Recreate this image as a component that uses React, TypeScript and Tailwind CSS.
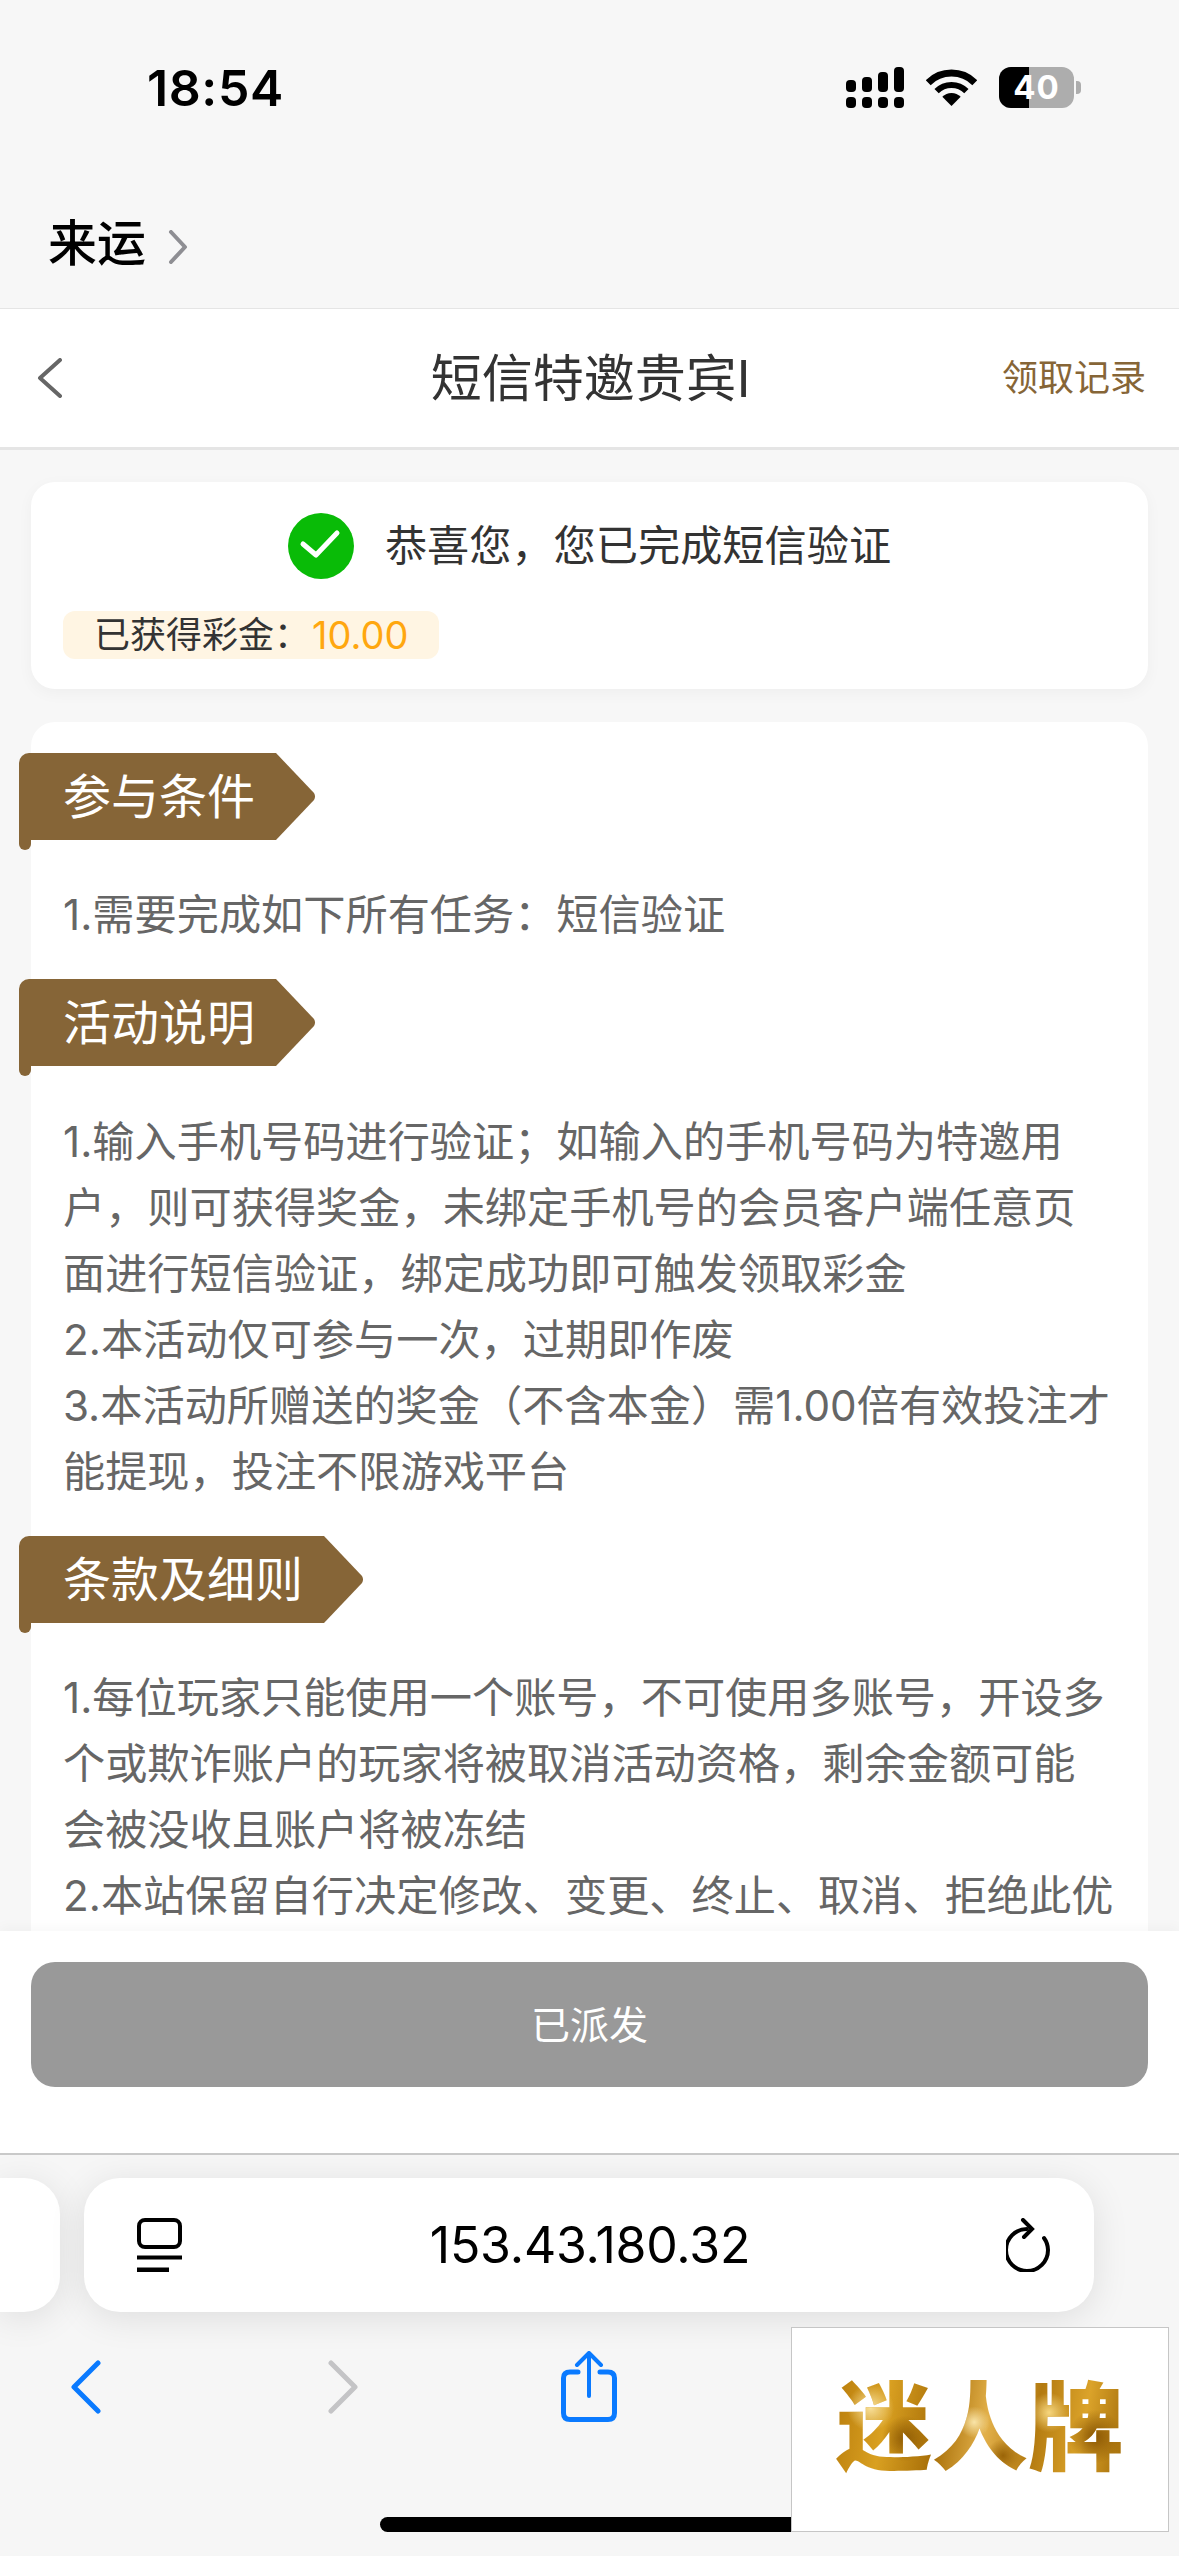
import React from 'react';

const SANS = 'font-["Inter","Noto_Sans_CJK_SC",sans-serif]';

const Ribbon: React.FC<{ title: string }> = ({ title }) => (
  <div className="relative -ml-[44px] flex w-fit">
    <div className="flex h-[87px] items-center rounded-tl-[10px] bg-[#866537] pl-[44px] pr-[21px] text-[48px] leading-none text-white">
      {title}
    </div>
    <svg width="41" height="87" viewBox="0 0 41 87" className="-ml-px block">
      <path d="M0 0 H1 L39 40 Q41 43.5 39 47 L1 87 H0 Z" fill="#866537" />
    </svg>
    <div className="absolute left-0 top-[87px] h-[10px] w-[12px] rounded-b-[8px] bg-[#866537]" />
  </div>
);

const Body: React.FC<{ lines: string[]; className?: string }> = ({ lines, className }) => (
  <div className={`text-[42.2px] leading-[66px] text-[#666666] ${className ?? ''}`}>
    {lines.map((line) => (
      <p key={line}>{line}</p>
    ))}
  </div>
);

const StatusBar: React.FC = () => (
  <div className="flex h-[130px] items-start justify-between pl-[147px] pr-[98px] pt-[61px]">
    <span className="text-[50px] font-semibold leading-[55px] tracking-[0.6px] text-black">18:54</span>
    <div className="flex items-start pt-[6px]">
      <svg width="58" height="41" viewBox="0 0 58 41" className="block">
        <rect x="0" y="13" width="10" height="12" rx="4" />
        <rect x="16" y="10" width="10" height="15" rx="4" />
        <rect x="32" y="5" width="10" height="20" rx="4" />
        <rect x="48" y="0" width="10" height="25" rx="4" />
        <rect x="0" y="30" width="10" height="11" rx="4" />
        <rect x="16" y="30" width="10" height="11" rx="4" />
        <rect x="32" y="30" width="10" height="11" rx="4" />
        <rect x="48" y="30" width="10" height="11" rx="4" />
      </svg>
      <svg width="51" height="37" viewBox="0 0 51 37" className="ml-[22px] mt-[2px] block">
        <path d="M25.5 37 L16.3 27.8 A13 13 0 0 1 34.7 27.8 Z" />
        <path d="M10.6 22.2 A21 21 0 0 1 40.4 22.2" fill="none" stroke="#000" strokeWidth="6" />
        <path d="M2.2 13.7 A33 33 0 0 1 48.8 13.7" fill="none" stroke="#000" strokeWidth="7" />
      </svg>
      <div className="relative ml-[22px] flex h-[41px] w-[75px] overflow-hidden rounded-[12px] bg-[#adadad]">
        <div className="h-full w-[30px] bg-black" />
        <span className="absolute inset-0 flex items-center justify-center text-[33px] font-bold leading-none tracking-[1px] text-white">
          40
        </span>
      </div>
      <div className="ml-[2px] mt-[14px] h-[13px] w-[5px] rounded-r-[4px] bg-[#adadad]" />
    </div>
  </div>
);

const BrowserBar: React.FC = () => (
  <div className="flex-1 bg-[#f6f6f6]">
    <div className="flex pt-[23px]">
      <div className="h-[134px] w-[60px] rounded-r-[36px] bg-white shadow-[0_6px_36px_rgba(0,0,0,0.10)]" />
      <div className="ml-[24px] flex h-[134px] w-[1010px] items-center rounded-[36px] bg-white pl-[53px] pr-[43px] shadow-[0_6px_36px_rgba(0,0,0,0.10)]">
        <svg width="45" height="54" viewBox="0 0 45 54" fill="none" stroke="#000" strokeWidth="4" className="block">
          <rect x="2" y="2" width="41" height="27" rx="6" />
          <path d="M0 39.5 H45" />
          <path d="M0 52 H32" strokeWidth="5" />
        </svg>
        <span className="flex-1 pr-[8px] text-center text-[50px] leading-none tracking-[-0.2px] text-black">153.43.180.32</span>
        <svg width="45" height="54" viewBox="0 0 45 54" fill="none" stroke="#000" strokeWidth="4" strokeLinecap="round" className="block">
          <path d="M21 11 A21 21 0 1 0 42 32 A21 21 0 0 0 38 20" />
          <path d="M17 2 L26 11 L18 19" />
        </svg>
      </div>
    </div>
    <div className="mt-[39px] flex h-[71px] items-center pl-[71px]">
      <svg width="30" height="54" viewBox="0 0 30 54" fill="none" stroke="#0a7aff" strokeWidth="5" strokeLinecap="round" strokeLinejoin="round" className="block">
        <path d="M27 3 L3 27 L27 51" />
      </svg>
      <svg width="30" height="54" viewBox="0 0 30 54" fill="none" stroke="#c4c4c6" strokeWidth="5" strokeLinecap="round" strokeLinejoin="round" className="ml-[227px] block">
        <path d="M3 3 L27 27 L3 51" />
      </svg>
      <svg width="56" height="71" viewBox="0 0 56 71" fill="none" stroke="#0a7aff" strokeLinecap="round" strokeLinejoin="round" className="ml-[203px] block">
        <path d="M17 21 H9 Q2.5 21 2.5 27 V62 Q2.5 68.5 9 68.5 H47 Q53.5 68.5 53.5 62 V27 Q53.5 21 47 21 H39" strokeWidth="5" />
        <path d="M28 3 V45" strokeWidth="4" />
        <path d="M16 14 L28 2 L40 14" strokeWidth="4" />
      </svg>
    </div>
  </div>
);

const App: React.FC = () => {
  return (
    <div lang="zh-CN" className={`relative flex h-[2556px] w-[1179px] flex-col overflow-hidden bg-[#f7f7f7] ${SANS}`}>
      <StatusBar />

      <div className="flex h-[178px] items-start pl-[48px] pt-[90px]">
        <span className="text-[49px] font-medium leading-[48px] text-black">来运</span>
        <svg width="20" height="34" viewBox="0 0 20 34" fill="none" stroke="#8e8e93" strokeWidth="4" strokeLinecap="round" strokeLinejoin="round" className="ml-[22px] mt-[10px] block">
          <path d="M3 2 L17 17 L3 32" />
        </svg>
      </div>

      <div className="flex h-[142px] items-center border-t-[1px] border-b-[3px] border-[#e5e5e5] bg-white pl-[37px] pr-[33px]">
        <div className="flex-1">
          <svg width="26" height="40" viewBox="0 0 26 40" fill="none" stroke="#666666" strokeWidth="4" strokeLinecap="round" strokeLinejoin="round" className="block">
            <path d="M23 2 L3 20 L23 38" />
          </svg>
        </div>
        <span className="-ml-[2px] text-[51px] leading-none text-[#333333]">短信特邀贵宾I</span>
        <div className="flex-1 text-right text-[36px] leading-none text-[#866537]">领取记录</div>
      </div>

      <div className="flex min-h-0 flex-1 flex-col gap-[33px] overflow-hidden px-[31px] pt-[32px]">
        <div className="h-[207px] shrink-0 rounded-[24px] bg-white px-[32px] pt-[31px] shadow-[0_4px_16px_rgba(0,0,0,0.04)]">
          <div className="flex items-center justify-center gap-[31px]">
            <svg width="66" height="66" viewBox="0 0 66 66" className="block">
              <circle cx="33" cy="33" r="33" fill="#09bb07" />
              <path d="M15 31 L28 42 L49 20" fill="none" stroke="#fff" strokeWidth="5" strokeLinecap="round" strokeLinejoin="round" />
            </svg>
            <span className="text-[42.2px] leading-none text-[#333333]">恭喜您，您已完成短信验证</span>
          </div>
          <div className="mt-[32px] flex h-[48px] w-[376px] items-center rounded-[12px] bg-[#fff5e3] pl-[31px] text-[36px] leading-none text-[#333333]">
            已获得彩金：
            <span className="ml-[2px] text-[38px] text-[#ffa70f]">10.00</span>
          </div>
        </div>

        <div className="flex-1 rounded-t-[24px] bg-white px-[32px] pt-[31px]">
          <Ribbon title="参与条件" />
          <Body className="mt-[42px]" lines={['1.需要完成如下所有任务：短信验证']} />
          <div className="mt-[31px]">
            <Ribbon title="活动说明" />
          </div>
          <Body
            className="mt-[43px]"
            lines={[
              '1.输入手机号码进行验证；如输入的手机号码为特邀用户，则可获得奖金，未绑定手机号的会员客户端任意页面进行短信验证，绑定成功即可触发领取彩金',
              '2.本活动仅可参与一次，过期即作废',
              '3.本活动所赠送的奖金（不含本金）需1.00倍有效投注才能提现，投注不限游戏平台',
            ]}
          />
          <div className="mt-[31px]">
            <Ribbon title="条款及细则" />
          </div>
          <Body
            className="mt-[42px]"
            lines={[
              '1.每位玩家只能使用一个账号，不可使用多账号，开设多个或欺诈账户的玩家将被取消活动资格，剩余金额可能会被没收且账户将被冻结',
              '2.本站保留自行决定修改、变更、终止、取消、拒绝此优',
            ]}
          />
        </div>
      </div>

      <div className="h-[224px] shrink-0 border-b-[2px] border-[#c9c9c9] bg-white px-[31px] pt-[31px] shadow-[0_-4px_12px_rgba(0,0,0,0.03)]">
        <div className="flex h-[125px] items-center justify-center rounded-[24px] bg-[#999999] text-[39px] leading-none text-white">
          已派发
        </div>
      </div>

      <div className="flex h-[401px] shrink-0 flex-col">
        <BrowserBar />
      </div>

      {/* home indicator, the logo box sits on top of it */}
      <div className="absolute left-[380px] top-[2517px] h-[15px] w-[440px] rounded-full bg-black" />
      <div className="absolute left-[791px] top-[2327px] flex h-[205px] w-[378px] items-center justify-center border-[1.5px] border-[#c6c6c6] bg-white pb-[6px]">
        <span className="bg-[radial-gradient(circle_at_12%_30%,#f8e09a_0,transparent_9%),radial-gradient(circle_at_24%_62%,#8f5c05_0,transparent_10%),radial-gradient(circle_at_48%_45%,#f9e4a8_0,transparent_10%),radial-gradient(circle_at_58%_80%,#9a6407_0,transparent_9%),radial-gradient(circle_at_74%_35%,#f6d67e_0,transparent_9%),radial-gradient(circle_at_90%_60%,#8a5704_0,transparent_10%),linear-gradient(100deg,#b97d0c_0%,#d9a021_18%,#a86f08_36%,#e2b04a_52%,#b37a10_68%,#dba32a_84%,#a06a08_100%)] bg-clip-text text-[96px] font-black leading-none text-transparent">
          迷人牌
        </span>
      </div>
    </div>
  );
};

export default App;
